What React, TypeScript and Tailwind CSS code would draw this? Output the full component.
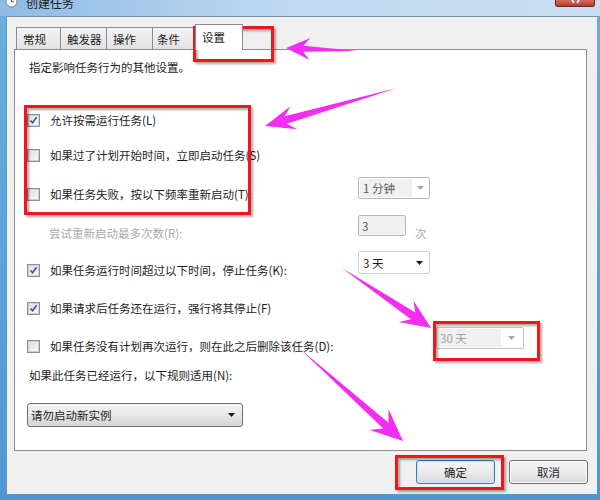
import clsx from 'clsx';

type Pt = [number, number];

// tapered annotation arrow: tip, swept-back barbs, thin tail
function arrowPoints(tip: Pt, tail: Pt, headLen: number, headHalf: number, neckHalf: number) {
  const dx = tail[0] - tip[0];
  const dy = tail[1] - tip[1];
  const len = Math.hypot(dx, dy);
  const ux = dx / len;
  const uy = dy / len;
  const px = -uy;
  const py = ux;
  const bx = tip[0] + ux * headLen;
  const by = tip[1] + uy * headLen;
  const nx = tip[0] + ux * headLen * 0.72;
  const ny = tip[1] + uy * headLen * 0.72;
  const pts: Pt[] = [
    tip,
    [bx + px * headHalf, by + py * headHalf],
    [nx + px * neckHalf, ny + py * neckHalf],
    tail,
    [nx - px * neckHalf, ny - py * neckHalf],
    [bx - px * headHalf, by - py * headHalf],
  ];
  return pts.map((p) => p.join(',')).join(' ');
}

function DownArrow({ color }: { color: string }) {
  return (
    <svg width="7" height="4" viewBox="0 0 7 4">
      <polygon points="0,0 7,0 3.5,4" fill={color} />
    </svg>
  );
}

function Checkbox({ checked }: { checked?: boolean }) {
  return (
    <span className="flex h-[13px] w-[13px] shrink-0 items-center justify-center border border-[#8e8f8f] bg-white">
      <span className="flex h-[11px] w-[11px] items-center justify-center border border-[#d0d2d4] bg-linear-to-br from-[#dcdee0] to-[#f8f9fa]">
        {checked && (
          <svg width="9" height="9" viewBox="0 0 9 9">
            <path d="M1.5 4.5 L3.6 6.8 L7.6 1.2" fill="none" stroke="#3b5594" strokeWidth="1.6" />
          </svg>
        )}
      </span>
    </span>
  );
}

function CheckRow({ label, checked, className }: { label: string; checked?: boolean; className?: string }) {
  return (
    <div className={clsx('flex items-center gap-[10px]', className)}>
      <Checkbox checked={checked} />
      <span className="whitespace-nowrap">{label}</span>
    </div>
  );
}

const tabs = [
  { label: '常规', className: 'w-[44px] pl-[6px]' },
  { label: '触发器', className: 'w-[46px] pl-[6px]' },
  { label: '操作', className: 'w-[46px] pl-[6px]' },
  { label: '条件', className: 'w-[43px] pl-[4px]' },
];

export default function App() {
  return (
    <div className="relative h-[500px] w-[600px] overflow-hidden bg-linear-to-b from-[#6aaee0] to-[#4d98d4] font-['Noto_Sans_CJK_SC',sans-serif] text-[11.5px] leading-[16px] text-[#1e1e1e]">
      {/* Title bar */}
      <div className="flex h-[16px] items-start overflow-hidden bg-linear-to-r from-[#8fbbe4] via-[#c2daf0] to-[#c8def2]">
        <svg className="ml-[5px] mt-[-5px] shrink-0" width="13" height="13" viewBox="0 0 13 13">
          <circle cx="6.5" cy="6.5" r="5.5" fill="#fdfdfd" stroke="#7a7a7a" strokeWidth="1" />
          <path d="M6.5 3 V6.8 H9" fill="none" stroke="#555" strokeWidth="1" />
        </svg>
        <span className="ml-[8px] mt-[-4px] text-[12px] leading-[14px] text-[#1a1a1a]">创建任务</span>
        <div className="ml-auto mr-[5px] flex h-[7px] w-[40px] items-start justify-center rounded-b-[3px] border border-t-0 border-[#6b2a2a] bg-linear-to-b from-[#d36a5c] to-[#b73a2c]">
          <svg width="9" height="4" viewBox="0 0 9 4">
            <path d="M1 0 L3 3 M8 0 L6 3" stroke="#fff" strokeWidth="1.6" />
          </svg>
        </div>
      </div>

      <div className="flex h-[478px]">
        <div className="w-[6px]" />
        {/* Client area */}
        <div className="flex flex-1 flex-col border-l border-t border-[#7d90a7] bg-[#f0f0f0] pt-[7px]">
          {/* Tabs */}
          <div className="ml-[9px] flex h-[25px] items-end">
            {tabs.map((t) => (
              <div
                key={t.label}
                className={clsx(
                  'flex h-[22px] items-center border-l border-t border-[#898c95] bg-linear-to-b from-[#f4f4f4] to-[#e2e2e2] text-[11.5px]',
                  t.className,
                )}
              >
                {t.label}
              </div>
            ))}
            <div className="relative z-10 -mb-px flex h-[26px] w-[48px] items-center border-x border-t border-[#898c95] bg-white pb-[1px] pl-[6px] text-[11.5px]">
              设置
            </div>
          </div>

          {/* Panel */}
          <div className="ml-[7px] flex h-[402px] w-[573px] flex-col border border-[#898c95] bg-white pl-[12px] pt-[9px]">
            <div className="ml-[2px]">指定影响任务行为的其他设置。</div>
            <CheckRow className="mt-[37px]" checked label="允许按需运行任务(L)" />
            <CheckRow className="mt-[19px]" label="如果过了计划开始时间，立即启动任务(S)" />

            <div className="mt-[14px] flex items-start">
              <CheckRow className="mt-[9px] w-[331px]" label="如果任务失败，按以下频率重新启动(T):" />
              <div className="flex h-[22px] w-[72px] items-stretch rounded-[2px] border border-[#b5b9bc] bg-white p-[1px]">
                <div className="flex w-[52px] items-center bg-[#f0f0f0] pl-[3px] text-[#5a5a5a]">1 分钟</div>
                <div className="flex flex-1 items-center justify-center">
                  <DownArrow color="#a3a3a3" />
                </div>
              </div>
            </div>

            <div className="mt-[13px] flex items-start">
              <div className="mt-[10px] w-[331px] pl-[22px] text-[#a9a9a9]">尝试重新启动最多次数(R):</div>
              <div className="flex h-[21px] w-[48px] items-center rounded-[2px] border border-[#b5b9bc] bg-[#f0f0f0] pl-[3px] text-[#5a5a5a]">
                3
              </div>
              <div className="ml-[9px] mt-[10px] text-[#a9a9a9]">次</div>
            </div>

            <div className="mt-[10px] flex items-start">
              <CheckRow className="mt-[11px] w-[331px]" checked label="如果任务运行时间超过以下时间，停止任务(K):" />
              <div className="flex h-[23px] w-[72px] items-center justify-between rounded-[2px] border border-[#cfd2d4] bg-white pl-[4px] pr-[6px]">
                <span>3 天</span>
                <DownArrow color="#1a1a1a" />
              </div>
            </div>

            <CheckRow className="mt-[22px]" checked label="如果请求后任务还在运行，强行将其停止(F)" />

            <div className="mt-[11px] flex items-start">
              <CheckRow className="mt-[11px] w-[409px]" label="如果任务没有计划再次运行，则在此之后删除该任务(D):" />
              <div className="flex h-[22px] w-[88px] items-stretch rounded-[2px] border border-[#c2c5c8] bg-white p-[1px]">
                <div className="flex w-[63px] items-center bg-[#f0f0f0] pl-[2px] text-[#a0a0a0]">30 天</div>
                <div className="flex flex-1 items-center justify-center">
                  <DownArrow color="#a8a8a8" />
                </div>
              </div>
            </div>

            <div className="ml-[2px] mt-[13px]">如果此任务已经运行，以下规则适用(N):</div>

            <div className="mt-[20px] flex h-[24px] w-[216px] items-center justify-between rounded-[3px] border border-[#707070] bg-linear-to-b from-[#f4f4f4] via-[#e8e8e8] to-[#d4d4d4] pl-[3px] pr-[7px]">
              <span>请勿启动新实例</span>
              <DownArrow color="#111" />
            </div>
          </div>

          {/* Buttons */}
          <div className="mt-[9px] flex justify-end gap-[14px] pr-[9px]">
            <button className="flex h-[24px] w-[79px] items-center justify-center rounded-[3px] border border-[#3c7fb1] bg-linear-to-b from-[#f6f6f6] via-[#ebebeb] to-[#d9d9d9] text-[11.5px] shadow-[inset_0_0_0_1px_#c9e5f7]">
              确定
            </button>
            <button className="flex h-[24px] w-[79px] items-center justify-center rounded-[3px] border border-[#707070] bg-linear-to-b from-[#f6f6f6] via-[#ebebeb] to-[#d9d9d9] text-[11.5px] shadow-[inset_0_0_0_1px_#fafafa]">
              取消
            </button>
          </div>
        </div>
        <div className="w-[3px]" />
      </div>

      {/* Annotations drawn over the screenshot */}
      <svg className="pointer-events-none absolute left-0 top-0" width="600" height="500" viewBox="0 0 600 500">
        <defs>
          <filter id="sh" x="-10%" y="-10%" width="130%" height="130%">
            <feDropShadow dx="2" dy="2" stdDeviation="1.2" floodColor="#000" floodOpacity="0.35" />
          </filter>
        </defs>
        <g fill="none" stroke="#f0141e" strokeWidth="3" filter="url(#sh)">
          <rect x="194.5" y="27.5" width="78" height="33" />
          <rect x="25.5" y="106.5" width="224" height="107" />
          <rect x="434.5" y="322.5" width="104" height="37" />
          <rect x="396.5" y="456.5" width="106" height="32" />
        </g>
        <g fill="#f22ef0">
          <polygon points={arrowPoints([286, 48], [358, 51], 24, 11, 3)} />
          <polygon points={arrowPoints([265, 126], [397, 88], 30, 12, 4)} />
          <polygon points={arrowPoints([431, 328], [342, 268], 30, 13, 4)} />
          <polygon points={arrowPoints([403, 441], [299, 348], 32, 14, 4)} />
        </g>
      </svg>
    </div>
  );
}
